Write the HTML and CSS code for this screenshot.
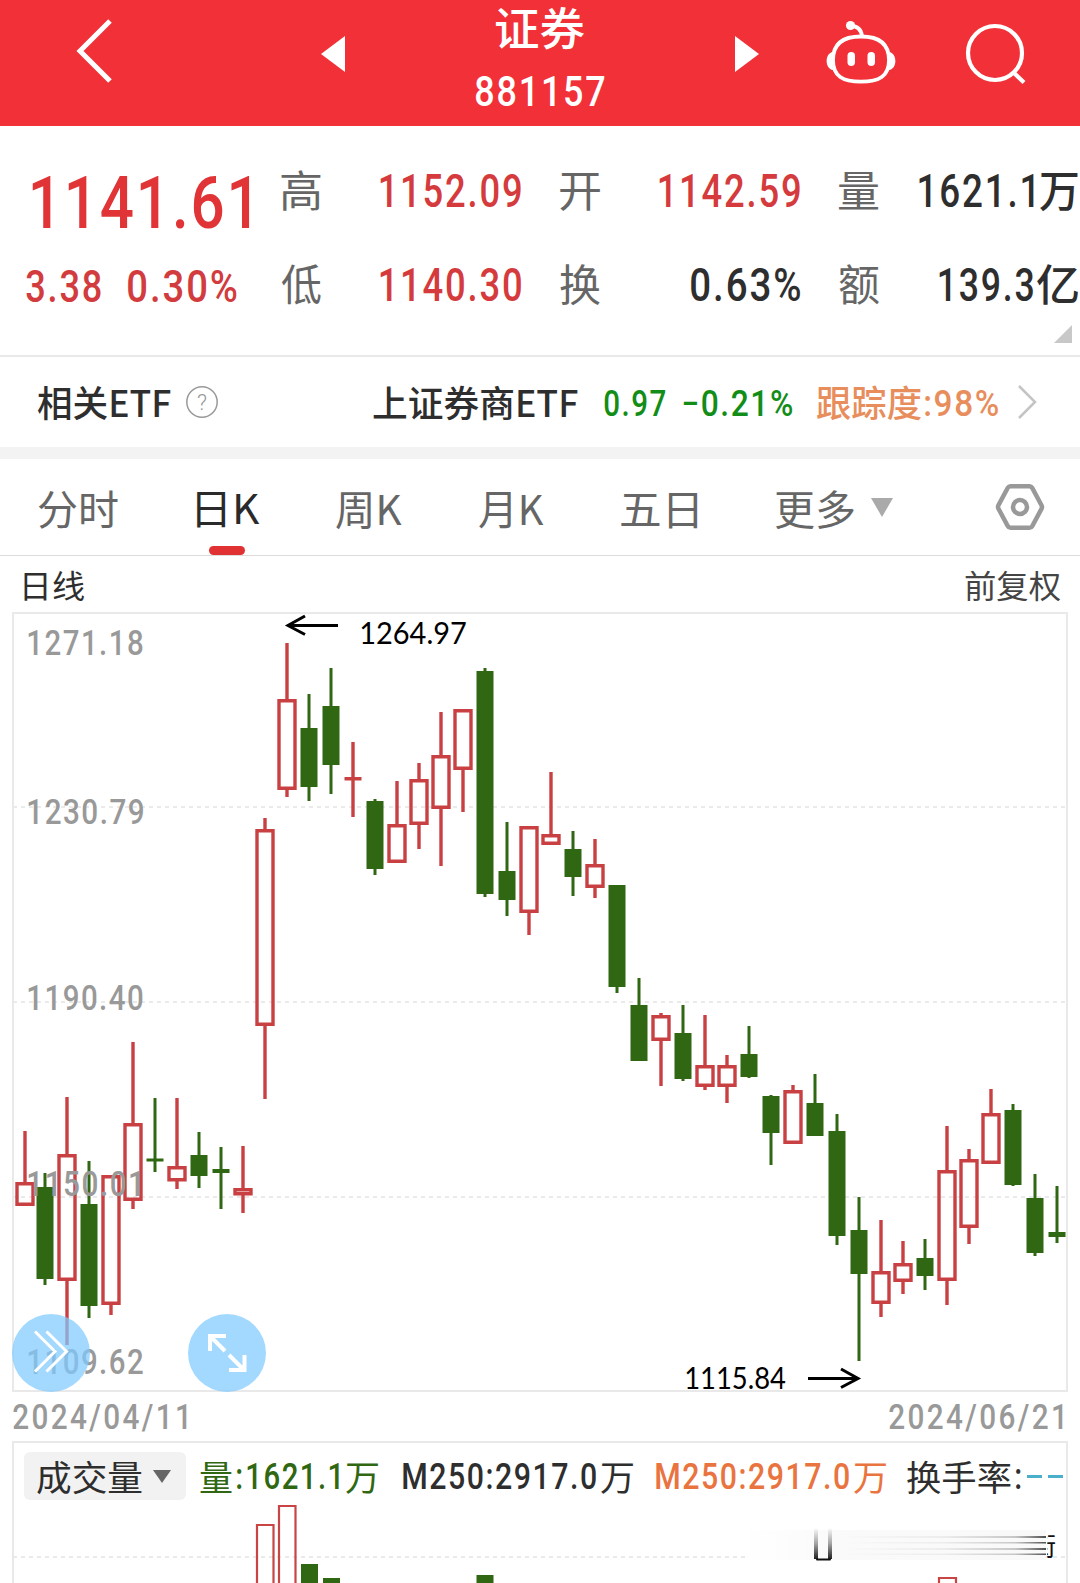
FILE: index.html
```html
<!DOCTYPE html>
<html lang="zh-CN">
<head>
<meta charset="utf-8">
<title>证券 881157</title>
<link rel="stylesheet" href="styles.css">
</head>
<body>
<header class="topbar">
  <svg class="back" width="44" height="70" viewBox="0 0 44 70"><path d="M39 5 9 35l30 30" fill="none" stroke="#fff" stroke-width="5"/></svg>
  <svg class="prev" width="24" height="36" viewBox="0 0 24 36"><path d="M24 0v36L0 18z" fill="#fff"/></svg>
  <div class="heading">
    <div class="name"><span class="fit cjk" data-w="89">证券</span></div>
    <div class="code"><span class="fit" data-w="129">881157</span></div>
  </div>
  <svg class="next" width="24" height="36" viewBox="0 0 24 36"><path d="M0 0v36l24-18z" fill="#fff"/></svg>
  <svg class="robot" width="72" height="66" viewBox="0 0 72 66">
    <g fill="none" stroke="#fff" stroke-width="3.800">
      <path d="M36 16.500c18 0 28 7 28 23.500S54 61.700 36 61.700 8 56.500 8 40 18 16.500 36 16.500z"/>
      <path d="M26 6c6 0 10 3 11 10"/>
    </g>
    <circle cx="25.500" cy="5.500" r="4.600" fill="#fff"/>
    <path d="M8 32c-8.500 1-8.500 17 0 18zM64 32c8.500 1 8.500 17 0 18z" fill="#fff"/>
    <rect x="22.500" y="32" width="7.500" height="14" rx="3.700" fill="#fff"/>
    <rect x="42.500" y="32" width="7.500" height="14" rx="3.700" fill="#fff"/>
  </svg>
  <svg class="search" width="62" height="64" viewBox="0 0 62 64"><g fill="none" stroke="#fff" stroke-width="4.200"><circle cx="31" cy="31" r="27"/><path d="M49 50l11 10.500"/></g></svg>
</header>

<section class="quote">
  <div class="last">
    <div class="price"><span class="fit" data-w="217">1141.61</span></div>
    <div class="change"><span class="fit" data-w="75">3.38</span><span class="fit" data-w="109">0.30%</span></div>
  </div>
  <div class="stats">
    <div class="stat"><label class="fit cjk" data-w="40">高</label><span class="fit up" data-w="141">1152.09</span></div>
    <div class="stat"><label class="fit cjk" data-w="40">开</label><span class="fit up" data-w="141">1142.59</span></div>
    <div class="stat"><label class="fit cjk" data-w="40">量</label><span class="pair"><span class="fit" data-w="115">1621.1</span><span class="fit cjk" data-w="38">万</span></span></div>
    <div class="stat"><label class="fit cjk" data-w="40">低</label><span class="fit up" data-w="141">1140.30</span></div>
    <div class="stat"><label class="fit cjk" data-w="40">换</label><span class="fit" data-w="109">0.63%</span></div>
    <div class="stat"><label class="fit cjk" data-w="40">额</label><span class="pair close"><span class="fit" data-w="94">139.3</span><span class="fit cjk" data-w="41">亿</span></span></div>
  </div>
  <svg class="corner" width="18" height="18" viewBox="0 0 18 18"><path d="M18 0v18H0z" fill="#c8c8c8"/></svg>
</section>

<section class="etf">
  <span class="fit cjk" data-w="134">相关ETF</span>
  <svg class="help" width="34" height="34" viewBox="0 0 34 34"><circle cx="17" cy="17" r="15.200" fill="none" stroke="#999" stroke-width="1.500"/><text x="17" y="25" text-anchor="middle" font-size="22" font-family="Roboto, sans-serif" fill="#999" font-weight="300">?</text></svg>
  <span class="fit cjk fund" data-w="205">上证券商ETF</span>
  <span class="fit down nav" data-w="61">0.97</span>
  <span class="fit down pct" data-w="109">−0.21%</span>
  <span class="fit cjk track" data-w="104">跟踪度</span>
  <span class="fit track-num" data-w="73">:98%</span>
  <svg class="go" width="22" height="36" viewBox="0 0 22 36"><path d="M2 2l16 16L2 34" fill="none" stroke="#c4c4c4" stroke-width="2.500"/></svg>
</section>

<nav class="tabs">
  <span class="fit cjk" data-w="80">分时</span>
  <span class="tab-on"><span class="fit cjk" data-w="63">日K</span></span>
  <span class="fit cjk" data-w="66">周K</span>
  <span class="fit cjk" data-w="65">月K</span>
  <span class="fit cjk" data-w="77">五日</span>
  <span class="fit cjk" data-w="79">更多</span>
  <svg class="caret" width="22" height="19" viewBox="0 0 22 19"><path d="M0 0h22L11 19z" fill="#aaa"/></svg>
  <svg class="gear" width="50" height="48" viewBox="0 0 50 48"><g fill="none" stroke="#999" stroke-width="4.500" stroke-linejoin="round"><path d="M15.500 3.200h19q1.800 0 2.700 1.600l9.300 17.400q1 1.800 0 3.600l-9.300 17.400q-.9 1.600-2.700 1.600h-19q-1.800 0-2.700-1.600L3.500 25.800q-1-1.800 0-3.600l9.300-17.400q.9-1.600 2.700-1.600z"/><circle cx="25" cy="24" r="7"/></g></svg>
</nav>

<div class="caption"><span class="fit cjk day" data-w="60">日线</span><span class="fit cjk adj" data-w="95">前复权</span></div>

<svg class="kline" id="kline" width="1080" height="780" viewBox="0 612 1080 780">
  <g class="frame">
    <path class="grid" d="M13 807H1067M13 1002H1067M13 1197H1067"/>
    <rect x="13" y="613" width="1054" height="778"/>
  </g>
  <g id="candles"></g>
  <g class="axis">
    <text data-x="28" data-y="655" data-w="115">1271.18</text>
    <text data-x="28" data-y="824" data-w="115">1230.79</text>
    <text data-x="28" data-y="1010" data-w="115">1190.40</text>
    <text data-x="28" data-y="1196" data-w="112">1150.01</text>
    <text data-x="28" data-y="1374" data-w="115">1109.62</text>
  </g>
  <g class="mark">
    <text data-x="361" data-y="644" data-w="105">1264.97</text>
    <text data-x="686" data-y="1389" data-w="100">1115.84</text>
    <path d="M338 625.500H288M305 616l-17 9.500 17 9M808 1378.500h50M841 1369l17 9.500-17 9"/>
  </g>
  <g class="tools">
    <circle cx="51" cy="1353" r="39"/><circle cx="227" cy="1353" r="39"/>
    <path stroke-width="3" d="M35 1331.500l20 20-20 20M46.500 1331.500l20 20-20 20"/>
    <path stroke-width="4" d="M226 1336h-16v15M210 1336l15 15M229 1370h15.500v-15M244 1370l-15-15"/>
  </g>
</svg>

<div class="dates"><span class="fit" data-w="174">2024/04/11</span><span class="fit" data-w="174">2024/06/21</span></div>

<section class="volume">
  <div class="legend">
    <span class="picker"><span class="fit cjk" data-w="105">成交量</span><svg width="18" height="13" viewBox="0 0 18 13"><path d="M0 0h18L9 13z" fill="#666"/></svg></span>
    <span class="item vol"><span class="fit cjk" data-w="32">量</span><span class="fit colon" data-w="5">:</span><span class="fit" data-w="92">1621.1</span><span class="fit cjk wan" data-w="32">万</span></span>
    <span class="item ma"><span class="fit" data-w="193">M250:2917.0</span><span class="fit cjk" data-w="32">万</span></span>
    <span class="item ma2"><span class="fit" data-w="193">M250:2917.0</span><span class="fit cjk" data-w="32">万</span></span>
    <span class="item turn"><span class="fit cjk" data-w="104">换手率</span><span class="fit colon" data-w="5">:</span><i></i><i></i></span>
  </div>
  <svg class="bars" width="1080" height="80" viewBox="0 1503 1080 80">
    <defs>
      <linearGradient id="down" x2="0" y2="1"><stop offset="0" stop-color="#222" stop-opacity="0"/><stop offset=".5" stop-color="#222" stop-opacity=".4"/><stop offset="1" stop-color="#222"/></linearGradient>
      <linearGradient id="along"><stop offset="0" stop-color="#555" stop-opacity="0"/><stop offset=".5" stop-color="#555" stop-opacity=".08"/><stop offset=".85" stop-color="#444" stop-opacity=".28"/><stop offset="1" stop-color="#222" stop-opacity=".8"/></linearGradient>
      <linearGradient id="veil"><stop offset="0" stop-color="#fff"/><stop offset=".3" stop-color="#fafafa"/><stop offset="1" stop-color="#f9f9f9"/></linearGradient>
      <clipPath id="tail"><rect x="1047" y="1530" width="14" height="34"/></clipPath>
    </defs>
    <path class="grid" d="M13 1557H1067"/>
    <g fill="none" stroke="#c94545" stroke-width="2.200"><path d="M257 1590v-65h16.500v65M279 1590v-84h16.500v84M939 1590v-12h17v12"/></g>
    <path fill="#306712" d="M301 1564h17v20h-17zM323 1578h17v6h-17zM476.500 1575h17v9h-17z"/>
    <rect x="745" y="1530" width="301" height="30" fill="url(#veil)"/>
    <g fill="url(#along)"><rect x="840" y="1536" width="206" height="2"/><rect x="840" y="1542" width="206" height="1.500"/><rect x="840" y="1548" width="206" height="2"/><rect x="840" y="1553.500" width="206" height="1.500"/></g>
    <rect x="814" y="1528" width="4" height="31" fill="url(#down)"/><rect x="828" y="1528" width="4" height="31" fill="url(#down)"/>
    <rect x="816" y="1558.500" width="15" height="2" rx="1" fill="#111"/>
    <g clip-path="url(#tail)"><text x="1030" y="1556" class="word">街</text></g>
  </svg>
</section>
<script src="app.js"></script>
</body>
</html>
```
FILE: styles.css
```css
* { box-sizing: border-box; }
body {
  margin: 0;
  width: 1080px;
  height: 1583px;
  overflow: hidden;
  background: #fff;
  color: #2e2e2e;
  font-family: Roboto, "Noto Sans CJK SC", sans-serif;
  font-weight: 500;
}
svg { display: block; flex: none; }
.fit { display: inline-block; flex: none; white-space: nowrap; line-height: 1.2; letter-spacing: .05em; padding-top: 3px; }
.cjk { font-family: "Noto Sans CJK SC", sans-serif; font-weight: 400; letter-spacing: 0; padding: 0 0 2px; }
.fit > b { display: inline-block; font-weight: inherit; transform-origin: 0 50%; }

.topbar { height: 126px; display: flex; background: #f13037; color: #fff; }
.back { margin: 16px 0 0 71px; }
.prev { margin: 36px 0 0 206px; }
.heading { width: 390px; display: flex; flex-direction: column; align-items: center; }
.name { height: 56px; display: flex; align-items: center; font-size: 45px; }
.name .cjk { font-weight: 500; }
.code { height: 69px; display: flex; align-items: center; font-size: 42px; }
.next { margin-top: 36px; }
.robot { margin: 20px 0 0 66px; }
.search { margin: 22px 0 0 67px; }

.quote { position: relative; height: 231px; display: flex; border-bottom: 2px solid #e9e9e9; }
.last { width: 281px; color: #e03437; }
.price { height: 110px; padding: 43px 0 0 32px; display: flex; align-items: center; font-size: 72px; line-height: 1; }
.price .fit { letter-spacing: .03em; }
.change { height: 98px; padding: 0 0 0 26px; display: flex; align-items: center; gap: 27px; font-size: 45px; color: #d23c3e; }
.stats { display: grid; grid-template-columns: 240px 240px 239px; grid-auto-rows: 94px; column-gap: 39px; padding-top: 17px; font-size: 46px; }
.stat { display: flex; align-items: center; justify-content: space-between; }
.stat label { color: #666; font-size: 43px; }
.pair { display: flex; align-items: center; gap: 6px; }
.close { gap: 4px; }
.pair .cjk { font-size: 43px; font-weight: 500; }
.up { color: #d53b3d; }
.corner { position: absolute; right: 8px; bottom: 12px; }

.etf { height: 90px; padding: 2px 0 0 37px; display: flex; align-items: center; font-size: 36px; }
.etf .cjk { font-weight: 450; }
.help { margin: 0 0 2px 14px; }
.fund { margin-left: 154px; }
.down { color: #128d17; }
.nav { margin-left: 26px; }
.pct { margin-left: 18px; }
.etf .track, .track-num { color: #e88d5c; }
.track { margin-left: 25px; }
.track-num { margin-left: 4px; }
.go { margin: 0 0 2px 19px; }

.tabs { height: 109px; border-top: 12px solid #f3f3f3; border-bottom: 1px solid #ddd; padding-left: 38px; display: flex; align-items: center; gap: 77px; font-size: 41px; color: #666; }
.tab-on { position: relative; color: #2a2a2a; margin: 0 -1px 0 2px; }
.tabs .fit { padding: 2px 0 0; }
.tab-on::after { content: ""; position: absolute; left: 12px; bottom: -21px; width: 36px; height: 9px; border-radius: 5px; background: #e03133; }
.caret { margin-left: -60px; }
.gear { margin-left: 25px; }

.caption { height: 56px; padding: 2px 20px 0 24px; display: flex; align-items: center; justify-content: space-between; font-size: 32px; }
.adj { color: #444; }

.frame rect { fill: none; stroke: #e9e9e9; stroke-width: 2; }
.grid { fill: none; stroke: #e3e3e3; stroke-width: 1.5; stroke-dasharray: 4 4; }
.rise { fill: none; stroke: #c94043; stroke-width: 3.4; }
.fall { fill: #306712; stroke: none; }
.axis text { font: 500 35px Roboto, sans-serif; fill: #999; letter-spacing: .05em; }
.mark text { font: 400 31px Lato, sans-serif; fill: #000; }
.mark path { fill: none; stroke: #000; stroke-width: 3; }
.tools circle { fill: #80cbff; fill-opacity: .72; }
.tools path { fill: none; stroke: #fff; }

.dates { height: 49px; padding: 0 17px 0 13px; display: flex; align-items: center; justify-content: space-between; font-size: 35px; color: #999; }
.dates .fit { letter-spacing: .08em; }

.volume { height: 142px; position: relative; }
.volume::before { content: ""; position: absolute; inset: 0 12px -9px; border: 2px solid #e9e9e9; }
.legend { position: relative; height: 62px; padding: 11px 0 3px 24px; display: flex; align-items: center; font-size: 36px; }
.legend .cjk { font-size: 35px; padding: 0; }
.picker { width: 162px; height: 48px; padding: 0 15px 0 13px; display: flex; align-items: center; justify-content: space-between; background: #f2f2f2; border-radius: 6px; }
.item { display: flex; align-items: center; gap: 5px; }
.vol { margin-left: 14px; color: #306712; }
.wan { margin-left: 2px; }
.ma { margin-left: 25px; }
.ma2 { margin-left: 23px; color: #e9743f; }
.turn { margin-left: 21px; }
.turn i { width: 15px; height: 3px; background: #4aafcb; margin-left: 1px; }
.bars { position: relative; }
.word { font: 400 26px "Noto Sans CJK SC", sans-serif; fill: #111; }
```
FILE: app.js
```js
// Candles: direction, high, body top, body bottom, low (chart pixels).
const candles = [
  ['r',1131,1182,1206,1206],['g',1173,1187,1279,1285],['r',1097,1154,1281,1345],['g',1161,1204,1306,1318],
  ['r',1175,1175,1305,1315],['r',1042,1123,1201,1209],['g',1098,1158.5,1161.5,1172],['r',1098,1166,1181.5,1189],
  ['g',1132,1155,1176,1188],['g',1147,1169,1173,1209],['r',1146,1188,1195.5,1213],['r',818,829,1026,1099],
  ['r',643,699,790,797],['g',694,728,787,801],['g',668,706,765,794],['r',742,777,780.5,817],
  ['g',799,801,869,875],['r',781,824,863,863],['r',763,779,825,849],['r',712,755,809,866],
  ['r',709,709,770,812],['g',668,671,894,897],['g',822,871,900,916],['r',826,826,913,935],
  ['r',772,834,845,845],['g',831,849,877,896],['r',839,864,888,898],['g',885,885,987,993],
  ['g',978,1005,1061,1061],['r',1013,1015,1041,1086],['g',1005,1033,1079,1081],['r',1015,1065,1087,1090],
  ['r',1055,1065,1087,1103],['g',1026,1054,1077,1078],['g',1095,1096,1133,1165],['r',1085,1090,1144,1144],
  ['g',1074,1103,1136,1136],['g',1114,1131,1236,1245],['g',1197,1230,1274,1361],['r',1220,1271,1304,1317],
  ['r',1241,1263,1282,1294],['g',1239,1258,1276,1290],['r',1126,1170,1281,1305],['r',1149,1159,1228,1244],
  ['r',1089,1113,1164,1164],['g',1104,1110,1185,1186],['g',1174,1198,1253,1256],['g',1186,1232,1237,1243]
];
document.getElementById('candles').innerHTML = candles.map(([dir, hi, top, bot, lo], i) => {
  const x = i === 0 ? 25 : 23 + i * 22;
  if (dir === 'g') {
    return `<path class="fall" d="M${x - 1.5} ${hi}h3V${lo}h-3zM${x - 8.5} ${top}h17V${bot}h-17z"/>`;
  }
  if (bot - top < 5) {
    return `<path class="rise" d="M${x} ${hi}V${lo}M${x - 8.5} ${(top + bot) / 2}h17"/>`;
  }
  return `<path class="rise" d="M${x} ${hi}V${top + 1}M${x} ${bot - 1}V${lo}M${x - 8} ${top + 1.7}h16V${bot - 1.7}h-16z"/>`;
}).join('');

// Scale each label horizontally so its glyphs fill the column width it is given.
const ctx = document.createElement('canvas').getContext('2d');
function ink(el) {
  const s = getComputedStyle(el), text = el.textContent;
  const gap = parseFloat(s.letterSpacing) || 0;
  ctx.font = `${s.fontWeight} ${s.fontSize} ${s.fontFamily}`;
  const m = ctx.measureText(text);
  return {
    left: -m.actualBoundingBoxLeft,
    width: m.actualBoundingBoxLeft + m.actualBoundingBoxRight + gap * (text.length - 1)
  };
}
document.querySelectorAll('.fit').forEach(el => {
  const w = +el.dataset.w, m = ink(el), b = document.createElement('b');
  b.textContent = el.textContent;
  el.textContent = '';
  el.appendChild(b);
  el.style.width = w + 'px';
  b.style.transform = `scaleX(${w / m.width}) translateX(${-m.left}px)`;
});
document.querySelectorAll('text[data-w]').forEach(el => {
  const m = ink(el), d = el.dataset;
  el.setAttribute('transform', `translate(${d.x} ${d.y}) scale(${d.w / m.width} 1) translate(${-m.left} 0)`);
});
```
